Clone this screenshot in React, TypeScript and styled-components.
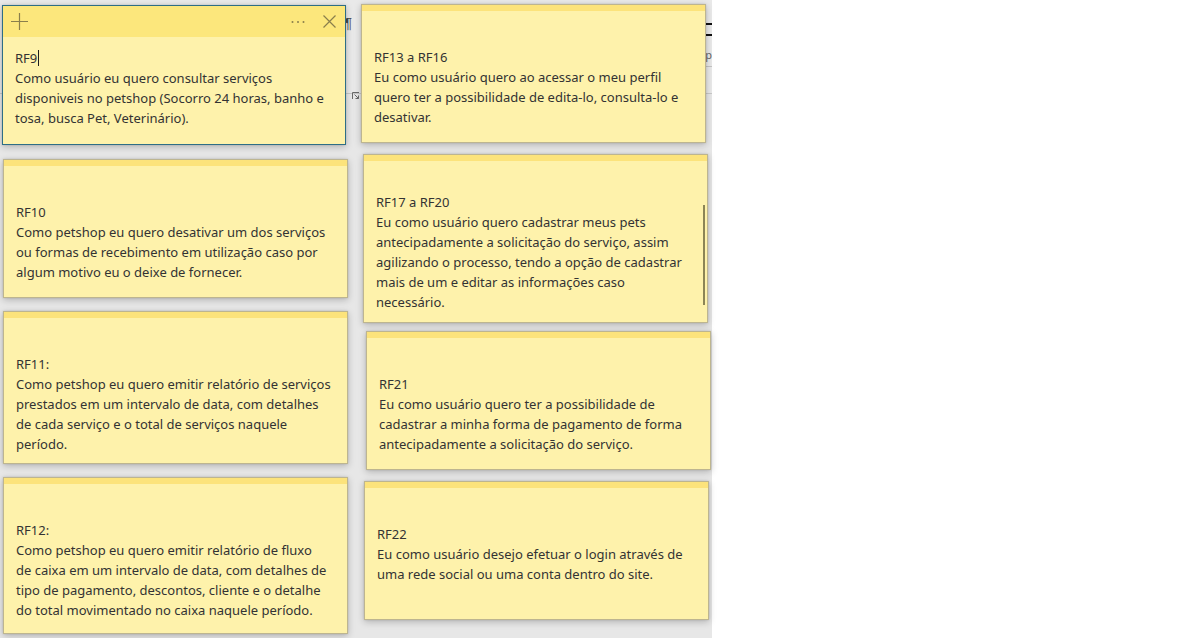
import styled, { createGlobalStyle, css } from "styled-components";

const GlobalStyle = createGlobalStyle`
  html, body {
    margin: 0;
    padding: 0;
    background: #ffffff;
  }
  body {
    font-family: "Noto Sans", "Open Sans", sans-serif;
  }
`;

const Desktop = styled.div`
  position: relative;
  width: 1181px;
  height: 638px;
  overflow: hidden;
  background: #ffffff;
`;

/* Word window peeking from behind the notes */
const Backdrop = styled.div`
  position: absolute;
  left: 0;
  top: 0;
  width: 712px;
  height: 638px;
  display: flex;
  flex-direction: column;
  overflow: hidden;
  background: #e7e7e7;
`;

const Ribbon = styled.div`
  height: 93px;
  display: flex;
  background: #e9e9e9;
  border-bottom: 1px solid #c8c8c8;
`;

const RibbonGroup = styled.div<{ $width: number }>`
  width: ${(p) => p.$width}px;
  flex: none;
  display: flex;
  flex-direction: column;
  align-items: flex-end;
`;

const Pilcrow = styled.span`
  margin-top: 15px;
  margin-right: 9px;
  font-family: "Liberation Sans", sans-serif;
  font-size: 14px;
  line-height: 16px;
  color: #4a4a4a;
`;

const Launcher = styled.div`
  margin-top: auto;
  margin-bottom: 4px;
  margin-right: 2px;
  width: 7px;
  height: 7px;
  color: #6a6a6a;
`;

const StyleBars = styled.div`
  margin-top: 23px;
  width: 8px;
  height: 9px;
  border-top: 2px solid #111;
  border-bottom: 2px solid #111;
`;

const StyleLetter = styled.span`
  margin-top: 12px;
  margin-right: 0px;
  font-size: 11px;
  line-height: 14px;
  color: #666;
`;

const StyleRule = styled.div`
  margin-top: 4px;
  width: 8px;
  border-top: 1px solid #c4c4c4;
`;

const Note = styled.div<{ $x: number; $y: number; $w: number; $h: number; $active?: boolean }>`
  position: absolute;
  left: ${(p) => p.$x}px;
  top: ${(p) => p.$y}px;
  width: ${(p) => p.$w}px;
  height: ${(p) => p.$h}px;
  box-sizing: border-box;
  display: flex;
  flex-direction: column;
  overflow: hidden;
  background: #fef2ab;
  border: 1px solid ${(p) => (p.$active ? "#2e6e86" : "#bdb590")};
  box-shadow: 0 2px 7px rgba(0, 0, 0, 0.22), 0 0 2px rgba(0, 0, 0, 0.12);
`;

const NoteHeader = styled.div<{ $active?: boolean }>`
  flex: none;
  height: 31px;
  box-sizing: border-box;
  display: flex;
  align-items: center;
  padding: 0 9px 0 8px;
  ${(p) =>
    p.$active
      ? css`
          background: #fce77c;
        `
      : css`
          border-top: 6px solid #fce37b;
        `}
`;

const HeaderButton = styled.span`
  display: flex;
  align-items: center;
  justify-content: center;
  color: #8a7f4c;
`;

const HeaderRight = styled.div`
  margin-left: auto;
  display: flex;
  align-items: center;
  gap: 18px;
`;

const NoteBody = styled.div<{ $scroll?: number }>`
  position: relative;
  flex: 1;
  padding: ${(p) => 11 - (p.$scroll ?? 0)}px 12px 0 12px;
  font-size: 13px;
  line-height: 20px;
  color: #333333;
  white-space: pre-line;
`;

const Caret = styled.span`
  display: inline-block;
  width: 1px;
  height: 16px;
  margin-left: 1px;
  vertical-align: -3px;
  background: #1e1e1e;
`;

const ScrollThumb = styled.div`
  position: absolute;
  right: 2px;
  top: 19px;
  width: 2px;
  height: 100px;
  background: #8c8556;
`;

type NoteData = {
  title: string;
  text: string;
  x: number;
  y: number;
  w: number;
  h: number;
  active?: boolean;
  scroll?: number;
};

const notes: NoteData[] = [
  {
    title: "RF9",
    text: "Como usuário eu quero consultar serviços\ndisponiveis no petshop (Socorro 24 horas, banho e\ntosa, busca Pet, Veterinário).",
    x: 2, y: 5, w: 344, h: 140, active: true,
  },
  {
    title: "RF13 a RF16",
    text: "Eu como usuário quero ao acessar o meu perfil\nquero ter a possibilidade de edita-lo, consulta-lo e\ndesativar.",
    x: 361, y: 4, w: 345, h: 139,
  },
  {
    title: "RF10",
    text: "Como petshop eu quero desativar um dos serviços\nou formas de recebimento em utilização caso por\nalgum motivo eu o deixe de fornecer.",
    x: 3, y: 159, w: 345, h: 139,
  },
  {
    title: "RF17 a RF20",
    text: "Eu como usuário quero cadastrar meus pets\nantecipadamente a solicitação do serviço, assim\nagilizando o processo, tendo a opção de cadastrar\nmais de um e editar as informações caso\nnecessário.",
    x: 363, y: 154, w: 345, h: 169, scroll: 5,
  },
  {
    title: "RF11:",
    text: "Como petshop eu quero emitir relatório de serviços\nprestados em um intervalo de data, com detalhes\nde cada serviço e o total de serviços naquele\nperíodo.",
    x: 3, y: 311, w: 345, h: 153,
  },
  {
    title: "RF21",
    text: "Eu como usuário quero ter a possibilidade de\ncadastrar a minha forma de pagamento de forma\nantecipadamente a solicitação do serviço.",
    x: 366, y: 331, w: 345, h: 139,
  },
  {
    title: "RF12:",
    text: "Como petshop eu quero emitir relatório de fluxo\nde caixa em um intervalo de data, com detalhes de\ntipo de pagamento, descontos, cliente e o detalhe\ndo total movimentado no caixa naquele período.",
    x: 3, y: 477, w: 345, h: 157,
  },
  {
    title: "RF22",
    text: "Eu como usuário desejo efetuar o login através de\numa rede social ou uma conta dentro do site.",
    x: 364, y: 481, w: 345, h: 139,
  },
];

const PlusIcon = () => (
  <svg width="17" height="17" viewBox="0 0 17 17" fill="none" stroke="currentColor" strokeWidth="1.2">
    <path d="M0 8.5h17M8.5 0v17" />
  </svg>
);

const DotsIcon = () => (
  <svg width="14" height="4" viewBox="0 0 14 4" fill="currentColor">
    <circle cx="1.5" cy="2" r="1" />
    <circle cx="7" cy="2" r="1" />
    <circle cx="12.5" cy="2" r="1" />
  </svg>
);

const CloseIcon = () => (
  <svg width="13" height="13" viewBox="0 0 13 13" fill="none" stroke="currentColor" strokeWidth="1.2">
    <path d="M0.5 0.5l12 12M12.5 0.5l-12 12" />
  </svg>
);

const LauncherIcon = () => (
  <svg width="7" height="7" viewBox="0 0 7 7" fill="none" stroke="currentColor" strokeWidth="1">
    <path d="M0.5 7V0.5H7M2.5 2.5l4 4M6.5 3.5v3h-3" />
  </svg>
);

const StickyNote = ({ note }: { note: NoteData }) => (
  <Note $x={note.x} $y={note.y} $w={note.w} $h={note.h} $active={note.active}>
    <NoteHeader $active={note.active}>
      {note.active && (
        <>
          <HeaderButton>
            <PlusIcon />
          </HeaderButton>
          <HeaderRight>
            <HeaderButton>
              <DotsIcon />
            </HeaderButton>
            <HeaderButton>
              <CloseIcon />
            </HeaderButton>
          </HeaderRight>
        </>
      )}
    </NoteHeader>
    <NoteBody $scroll={note.scroll}>
      {note.title}
      {note.active && <Caret />}
      {"\n"}
      {note.text}
      {note.scroll ? <ScrollThumb /> : null}
    </NoteBody>
  </Note>
);

export default function App() {
  return (
    <>
      <GlobalStyle />
      <Desktop>
        <Backdrop>
          <Ribbon>
            <RibbonGroup $width={361}>
              <Pilcrow>¶</Pilcrow>
              <Launcher>
                <LauncherIcon />
              </Launcher>
            </RibbonGroup>
            <RibbonGroup $width={351}>
              <StyleBars />
              <StyleLetter>p</StyleLetter>
              <StyleRule />
            </RibbonGroup>
          </Ribbon>
        </Backdrop>
        {notes.map((n) => (
          <StickyNote key={n.title} note={n} />
        ))}
      </Desktop>
    </>
  );
}
